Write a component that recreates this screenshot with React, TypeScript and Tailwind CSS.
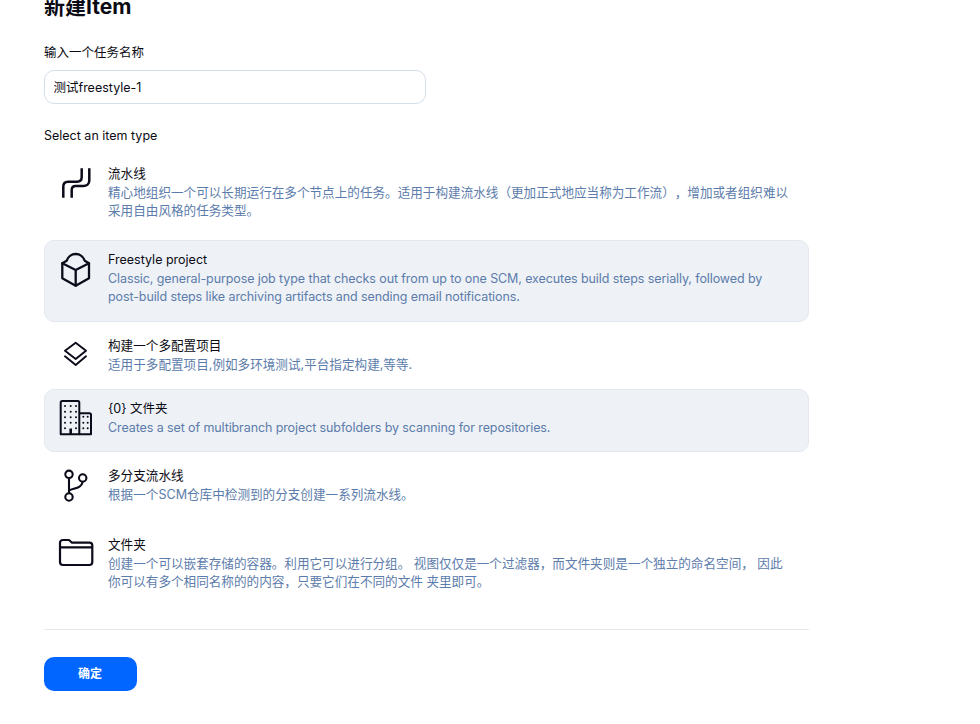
function PipelineIcon() {
  return (
    <svg width="44" height="44" viewBox="0 0 44 44" fill="none" stroke="#0b0b1a" strokeWidth="2.5">
      <path d="M9.3 33.7V22.5c0-3 1.7-4.8 4.7-4.8h9c3 0 4.7-1.8 4.7-4.7V4.3" />
      <path d="M17.7 33.7V26c0-2.5 1.6-4 4-4h7.6c3.3 0 6-2.2 6-5.5V4.3" />
    </svg>
  );
}

function CubeIcon() {
  return (
    <svg width="44" height="44" viewBox="0 0 44 44" fill="none" stroke="#0b0b1a" strokeWidth="2.3" strokeLinejoin="round" strokeLinecap="round">
      <path d="M8.3 13.3V28.3L21.7 35.7L35 28.3V13.3L30.7 10.7A9.4 9.4 0 0 0 12.7 10.7L8.3 13.3Z" />
      <path d="M8.3 13.3L21.7 20L35 13.3M21.7 20V35.7" />
    </svg>
  );
}

function LayersIcon() {
  return (
    <svg width="44" height="44" viewBox="0 0 44 44" fill="none" stroke="#0b0b1a" strokeWidth="1.9" strokeLinejoin="round" strokeLinecap="round">
      <path d="M21.7 6.7L32 14.7L21.7 23L11 14.7Z" />
      <path d="M11 20.3L21.7 29L32 20.3" />
    </svg>
  );
}

function BuildingIcon() {
  const big = [11, 16.7, 22].flatMap((x) => [7, 12.7, 18.3, 23.7, 29.3].map((y) => [x, y]));
  const small = [29.3, 33.7].flatMap((x) => [17.7, 23.7, 29.3].map((y) => [x, y]));
  return (
    <svg width="44" height="44" viewBox="0 0 44 44" fill="none" stroke="#0b0b1a" strokeWidth="2" strokeLinejoin="round">
      <path d="M6.7 35.3V3.5a1.5 1.5 0 0 1 1.5-1.5h15.6a1.5 1.5 0 0 1 1.5 1.5V35.3Z" />
      <path d="M25.3 14.3H35.5a1.5 1.5 0 0 1 1.5 1.5V35.3H25.3" />
      <path d="M16.7 35.3V29.5" strokeWidth="2.6" />
      {[...big, ...small]
        .filter(([x, y]) => !(x === 16.7 && y === 29.3))
        .map(([x, y]) => (
          <circle key={`${x}-${y}`} cx={x} cy={y} r="1" fill="#0b0b1a" stroke="none" />
        ))}
    </svg>
  );
}

function BranchIcon() {
  return (
    <svg width="44" height="44" viewBox="0 0 44 44" fill="none" stroke="#0b0b1a" strokeWidth="2.1" strokeLinecap="round">
      <circle cx="15" cy="8.3" r="3.7" />
      <circle cx="28.7" cy="12" r="3.7" />
      <circle cx="15" cy="31" r="3.7" />
      <path d="M15 12V27.3" />
      <path d="M15 24.5C20 22 27.8 22.5 28.7 15.7" />
    </svg>
  );
}

function FolderIcon() {
  return (
    <svg width="44" height="44" viewBox="0 0 44 44" fill="none" stroke="#0b0b1a" strokeWidth="2.2" strokeLinejoin="round">
      <path d="M8.8 5H15L18 7.7H35.5A2.8 2.8 0 0 1 38.3 10.5V27A3 3 0 0 1 35.3 30H9A3 3 0 0 1 6 27V7.8A2.8 2.8 0 0 1 8.8 5Z" />
      <path d="M6 12.3H38.3" />
    </svg>
  );
}

const items = [
  {
    title: "流水线",
    desc: "精心地组织一个可以长期运行在多个节点上的任务。适用于构建流水线（更加正式地应当称为工作流），增加或者组织难以采用自由风格的任务类型。",
    icon: <PipelineIcon />,
    box: "h-[82px] mb-1 border-transparent text-[12.6px]",
    descCls: "",
  },
  {
    title: "Freestyle project",
    desc: "Classic, general-purpose job type that checks out from up to one SCM, executes build steps serially, followed by post-build steps like archiving artifacts and sending email notifications.",
    icon: <CubeIcon />,
    box: "h-[82px] mb-1 bg-[#eef1f6] border-[#e4e8ef]",
    descCls: "tracking-[-0.1px]",
  },
  {
    title: "构建一个多配置项目",
    desc: "适用于多配置项目,例如多环境测试,平台指定构建,等等.",
    icon: <LayersIcon />,
    box: "h-[63px] border-transparent text-[12.6px]",
    descCls: "",
  },
  {
    title: "{0} 文件夹",
    desc: "Creates a set of multibranch project subfolders by scanning for repositories.",
    icon: <BuildingIcon />,
    box: "h-[63px] mb-1 bg-[#eef1f6] border-[#e4e8ef]",
    descCls: "tracking-[-0.1px]",
  },
  {
    title: "多分支流水线",
    desc: "根据一个SCM仓库中检测到的分支创建一系列流水线。",
    icon: <BranchIcon />,
    box: "h-[69px] border-transparent text-[12.6px]",
    descCls: "",
  },
  {
    title: "文件夹",
    desc: "创建一个可以嵌套存储的容器。利用它可以进行分组。 视图仅仅是一个过滤器，而文件夹则是一个独立的命名空间， 因此你可以有多个相同名称的的内容，只要它们在不同的文件 夹里即可。",
    icon: <FolderIcon />,
    box: "h-[82px] border-transparent text-[12.6px]",
    descCls: "",
  },
];

export default function App() {
  return (
    <div className="h-[724px] w-[980px] overflow-hidden bg-white pl-[44px] font-['Inter','Noto_Sans_CJK_SC',sans-serif] text-[12.5px] leading-[18.5px] text-[#0b0b14]">
      <div className="w-[765px]">
        <h1 className="-mt-[6px] h-[36px] text-[21px] font-bold leading-[26px]">新建Item</h1>
        <label className="mt-[14px] block h-[19px]">输入一个任务名称</label>
        <input
          defaultValue="测试freestyle-1"
          className="mt-[7px] block h-[34px] w-[382px] rounded-[10px] border border-[#d5dfea] pl-[8.5px] pr-[9px] pb-[2px] text-[12.5px] outline-none"
        />
        <div className="mt-[23px] h-[19px]">Select an item type</div>
        <div className="mt-[8px]">
          {items.map((item) => (
            <div key={item.title} className={`flex gap-[10px] rounded-[10px] border pl-[9px] pt-[8.5px] ${item.box}`}>
              <div className="h-[44px] w-[44px] shrink-0">{item.icon}</div>
              <div className="w-[684px] pt-[1px]">
                <div className="h-[19px]">{item.title}</div>
                <div className={`text-[#5c7cab] [text-spacing-trim:space-all] ${item.descCls}`}>{item.desc}</div>
              </div>
            </div>
          ))}
        </div>
        <div className="mt-[22px] border-t border-[#e6e6ed]" />
        <button className="mt-[27px] block h-[34px] w-[93px] rounded-[10px] bg-[#0066ff] pr-[1px] text-center text-[12px] font-semibold text-white">
          确定
        </button>
      </div>
    </div>
  );
}
